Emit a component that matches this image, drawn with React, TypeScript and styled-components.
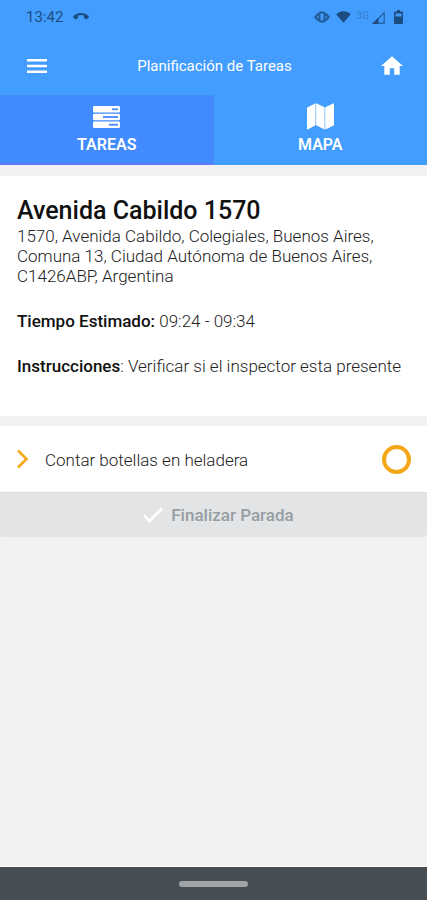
import React, { useState } from "react";
import styled, { createGlobalStyle } from "styled-components";

const GlobalStyle = createGlobalStyle`
  *, *::before, *::after { box-sizing: border-box; }
  body {
    margin: 0;
    background: #f2f2f2;
    font-family: Roboto, "Liberation Sans", sans-serif;
    color: #222;
  }
  button { font: inherit; border: 0; padding: 0; background: none; cursor: pointer; }
  svg { display: block; flex: none; }
`;

const Screen = styled.div`
  min-height: 100vh;
  display: flex;
  flex-direction: column;
`;

const StatusBar = styled.div`
  display: flex;
  align-items: center;
  justify-content: space-between;
  height: 36px;
  padding: 0 24px 2px 26px;
  background: #429dff;
  color: #1d4d80;
  font-size: 15px;
`;

const StatusGroup = styled.div<{ $gap: number }>`
  display: flex;
  align-items: center;
  gap: ${(p) => p.$gap}px;
`;

const Network = styled.span`
  align-self: flex-start;
  font-size: 10px;
  line-height: 10px;
  color: #3380cd;
`;

const Toolbar = styled.header`
  display: grid;
  grid-template-columns: 24px 1fr 24px;
  align-items: center;
  height: 59px;
  padding: 0 23px 0 25px;
  background: #429dff;
  color: #fff;
`;

const Title = styled.h1`
  margin: 0;
  text-align: center;
  font-size: 15px;
  line-height: 20px;
  font-weight: 400;
`;

const IconButton = styled.button`
  display: flex;
  align-items: center;
  justify-content: center;
  height: 32px;
  color: inherit;
`;

const Tabs = styled.nav`
  display: grid;
  grid-template-columns: 1fr 1fr;
`;

const Tab = styled.button<{ $active: boolean }>`
  display: flex;
  flex-direction: column;
  align-items: center;
  gap: 2px;
  height: 70px;
  padding-top: 7px;
  color: #fff;
  font-size: 16px;
  line-height: 24px;
  font-weight: 600;
  background: ${(p) => (p.$active ? "#428bff" : "#429dff")};
  border-bottom: 2px solid ${(p) => (p.$active ? "#5c7cff" : "#429dff")};
`;

const Content = styled.main`
  flex: 1;
  display: flex;
  flex-direction: column;
  gap: 10px;
  padding-top: 11px;
`;

const StopCard = styled.section`
  padding: 19px 17px 40px;
  background: #fff;
  font-size: 17px;
  line-height: 20px;
  font-weight: 300;
`;

const StopName = styled.h2`
  margin: 0;
  font-size: 25px;
  line-height: 31px;
  font-weight: 500;
  color: #111;
`;

const Line = styled.p`
  margin: 0 0 25px;
  &:last-child { margin-bottom: 0; }
`;

const Label = styled.strong`
  font-weight: 500;
  color: #111;
`;

const TaskRow = styled.label`
  display: flex;
  align-items: center;
  gap: 16px;
  height: 66px;
  padding: 0 16px 0 15px;
  background: #fff;
  font-size: 17px;
  font-weight: 300;
  cursor: pointer;
`;

const TaskName = styled.span`
  flex: 1;
  padding-top: 2px;
`;

const TaskCheck = styled.input`
  appearance: none;
  width: 29px;
  height: 29px;
  margin: 0;
  border: 4px solid #f5a71a;
  border-radius: 50%;
  &:checked { background: #f5a71a; box-shadow: inset 0 0 0 4px #fff; }
`;

const FinishButton = styled.button`
  display: flex;
  align-items: center;
  justify-content: center;
  gap: 8px;
  width: 100%;
  height: 45px;
  padding-left: 10px;
  border-radius: 0 0 4px 4px;
  background: #e2e4e6;
  box-shadow: inset 0 1px 0 #d9dbdd;
  color: #969da3;
  font-size: 17px;
  font-weight: 500;
`;

const SystemBar = styled.footer`
  display: flex;
  align-items: center;
  justify-content: center;
  height: 33px;
  background: #464e54;
  box-shadow: 0 -1px 0 #fff;
`;

const HomeHandle = styled.div`
  width: 69px;
  height: 6px;
  border-radius: 3px;
  background: #a0a4a7;
`;

const CallIcon = () => (
  <svg width="16" height="8" viewBox="0 0 16 8" fill="currentColor">
    <path d="M8 0C4.700 0 2 1.400.3 3.300c-.3.300-.3.800 0 1.100l2 1.800c.3.200.7.200 1 0l1.500-1.200c.3-.2.400-.5.300-.8l-.2-1.400C6 2.300 7 2.100 8 2.100s2 .2 3.100.7l-.2 1.400c0 .3.100.6.300.8l1.500 1.200c.3.200.7.200 1 0l2-1.800c.3-.3.300-.8 0-1.100C14 1.400 11.300 0 8 0z" />
  </svg>
);

const VibrateIcon = () => (
  <svg width="16" height="12" viewBox="0 0 16 12" fill="none" stroke="currentColor" opacity="0.85">
    <path d="M4.500 2.500 1.300 6l3.200 3.500M11.500 2.500 14.700 6l-3.200 3.500" strokeWidth="2" />
    <rect x="5.500" y="1.500" width="5" height="9" rx="1" strokeWidth="2" />
  </svg>
);

const WifiIcon = () => (
  <svg width="15" height="12" viewBox="0 0 16 13" fill="currentColor">
    <path d="M8 12.800.1 3.600C2.200 1.400 5 .4 8 .4s5.800 1 7.900 3.200z" />
  </svg>
);

const SignalIcon = () => (
  <svg width="13" height="13" viewBox="0 0 13 13">
    <path d="M1.800 12.200 12.200 1.800v10.400z" fill="none" stroke="currentColor" strokeWidth="1.200" opacity="0.8" />
    <path d="M0 13 6.500 6.500V13z" fill="currentColor" />
  </svg>
);

const BatteryIcon = () => (
  <svg width="9" height="14" viewBox="0 0 9 14" fill="currentColor">
    <path fillRule="evenodd" d="M3 0h3v1.500h2c.6 0 1 .4 1 1V13c0 .6-.4 1-1 1H1c-.6 0-1-.4-1-1V2.500c0-.6.4-1 1-1h2zM1.500 3.500v3h6v-3z" />
  </svg>
);

const MenuIcon = () => (
  <svg width="20" height="14" viewBox="0 0 20 14" fill="currentColor">
    <path d="M0 0h20v2.500H0zM0 5.700h20v2.500H0zM0 11.500h20V14H0z" />
  </svg>
);

const HomeIcon = () => (
  <svg width="22" height="19" viewBox="0 0 20 17" fill="currentColor">
    <path d="M8 17v-6h4v6h5V9h3L10 0 0 9h3v8z" />
  </svg>
);

const TasksIcon = () => (
  <svg width="27" height="22" viewBox="0 0 27 22">
    <g fill="#fff">
      <rect width="27" height="6.500" rx="1.300" />
      <rect y="7.750" width="27" height="6.500" rx="1.300" />
      <rect y="15.500" width="27" height="6.500" rx="1.300" />
    </g>
    <g fill="#428bff">
      <rect x="19" y="2.400" width="6" height="1.800" />
      <rect x="10" y="10.100" width="15" height="1.800" />
      <rect x="16" y="17.800" width="9" height="1.800" />
    </g>
  </svg>
);

const MapIcon = () => (
  <svg width="27" height="27" viewBox="0 0 27 27" fill="#fff">
    <path d="M.7 4.200 8.500.3v21.900L.7 26.500c-.4.200-.7 0-.7-.4V5.200c0-.4.300-.8.700-1zM9.100.3l8.500 3.900v22.300l-8.500-4.300zM18.200 4.200 26.300.4c.4-.2.700 0 .7.400v20.900c0 .4-.3.800-.7 1l-8.100 3.900z" />
  </svg>
);

const ChevronIcon = () => (
  <svg width="14" height="20" viewBox="0 0 14 20" fill="none" stroke="#f5a71a" strokeWidth="2.600">
    <path d="m3 1.500 8.500 8.500L3 18.500" />
  </svg>
);

const CheckIcon = () => (
  <svg width="20" height="16" viewBox="0 0 20 16" fill="none" stroke="#fff" strokeWidth="2.600">
    <path d="m1 8.500 5.500 5.500L19 1.500" />
  </svg>
);

const TabIcon = styled.span`
  display: flex;
  align-items: center;
  height: 29px;
`;

const tabs = [
  { id: "tareas", label: "TAREAS", Icon: TasksIcon },
  { id: "mapa", label: "MAPA", Icon: MapIcon },
];

export default function App() {
  const [active, setActive] = useState("tareas");
  const [done, setDone] = useState(false);

  return (
    <Screen>
      <GlobalStyle />
      <StatusBar>
        <StatusGroup $gap={10}>
          <span>13:42</span>
          <CallIcon />
        </StatusGroup>
        <StatusGroup $gap={9}>
          <StatusGroup $gap={6}>
            <VibrateIcon />
            <WifiIcon />
            <StatusGroup $gap={3}>
              <Network>3G</Network>
              <SignalIcon />
            </StatusGroup>
          </StatusGroup>
          <BatteryIcon />
        </StatusGroup>
      </StatusBar>
      <Toolbar>
        <IconButton aria-label="Menú"><MenuIcon /></IconButton>
        <Title>Planificación de Tareas</Title>
        <IconButton aria-label="Inicio"><HomeIcon /></IconButton>
      </Toolbar>
      <Tabs>
        {tabs.map(({ id, label, Icon }) => (
          <Tab key={id} $active={id === active} onClick={() => setActive(id)}>
            <TabIcon><Icon /></TabIcon>
            {label}
          </Tab>
        ))}
      </Tabs>
      <Content>
        <StopCard>
          <StopName>Avenida Cabildo 1570</StopName>
          <Line>
            1570, Avenida Cabildo, Colegiales, Buenos Aires, Comuna 13, Ciudad
            Autónoma de Buenos Aires, C1426ABP, Argentina
          </Line>
          <Line><Label>Tiempo Estimado:</Label> 09:24 - 09:34</Line>
          <Line><Label>Instrucciones</Label>: Verificar si el inspector esta presente</Line>
        </StopCard>
        <section>
          <TaskRow>
            <ChevronIcon />
            <TaskName>Contar botellas en heladera</TaskName>
            <TaskCheck type="checkbox" checked={done} onChange={() => setDone(!done)} />
          </TaskRow>
          <FinishButton disabled={!done}>
            <CheckIcon />
            Finalizar Parada
          </FinishButton>
        </section>
      </Content>
      <SystemBar><HomeHandle /></SystemBar>
    </Screen>
  );
}
